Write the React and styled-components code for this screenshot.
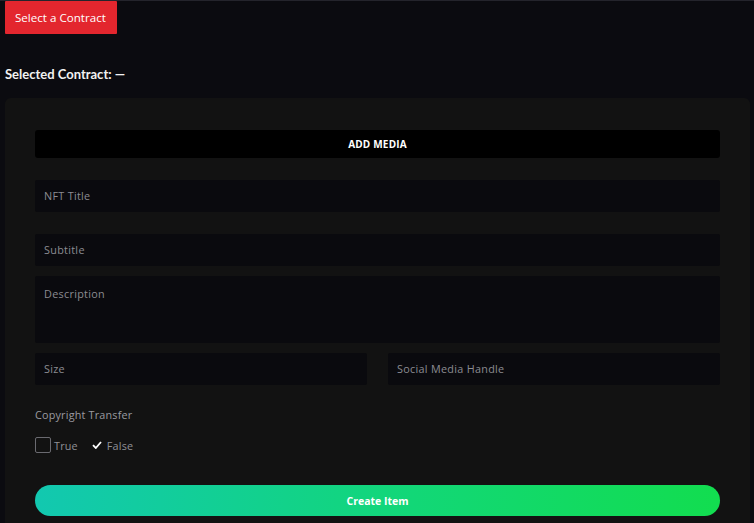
import styled, { createGlobalStyle } from "styled-components";

const GlobalStyle = createGlobalStyle`
  html, body {
    margin: 0;
    padding: 0;
    background: #0b0b10;
  }
  body {
    font-family: "Open Sans", "Liberation Sans", sans-serif;
    color: #ffffff;
  }
`;

const Page = styled.div`
  min-height: 523px;
  box-sizing: border-box;
  border-top: 1px solid #24242c;
  padding: 0 4px 0 5px;
  display: flex;
  flex-direction: column;
  align-items: flex-start;
  overflow: hidden;
`;

const SelectButton = styled.button`
  height: 33px;
  padding: 0 11px 0 10px;
  border: none;
  border-radius: 1px;
  background: #e3262e;
  color: #ffffff;
  font-family: "Open Sans", sans-serif;
  font-size: 11.6px;
  cursor: pointer;
`;

const SelectedLabel = styled.h3`
  margin: 32px 0 0;
  font-family: "Lato", "Liberation Sans", sans-serif;
  font-size: 13px;
  font-weight: 700;
  line-height: 16px;
  color: #f2f2f2;
`;

const Panel = styled.div`
  align-self: stretch;
  margin-top: 16px;
  background: #121212;
  border-radius: 6px;
  padding: 32px 30px 20px;
  display: flex;
  flex-direction: column;
`;

const MediaButton = styled.button`
  height: 28px;
  border: none;
  border-radius: 3px;
  background: #000000;
  color: #ffffff;
  font-family: "Open Sans", sans-serif;
  font-weight: 700;
  font-size: 10px;
  letter-spacing: 0.2px;
`;

const Field = styled.div`
  height: ${(p) => p.$h || 32}px;
  margin-top: ${(p) => p.$mt || 0}px;
  flex: ${(p) => (p.$grow ? 1 : "none")};
  background: #0a0a0e;
  border-radius: 2px;
  box-sizing: border-box;
  padding: ${(p) => (p.$area ? "10px 9px" : "0 9px 1px")};
  display: flex;
  align-items: ${(p) => (p.$area ? "flex-start" : "center")};
  font-size: 10.8px;
  letter-spacing: 0.3px;
  color: #8c8c92;
`;

const Row = styled.div`
  display: flex;
  gap: 21px;
  margin-top: 10px;
`;

const GroupLabel = styled.div`
  margin-top: 22px;
  font-size: 10.8px;
  letter-spacing: 0.2px;
  color: #9a9aa0;
`;

const Options = styled.div`
  display: flex;
  align-items: center;
  margin-top: 15px;
  gap: 3px;
  font-size: 10.8px;
  letter-spacing: 0.2px;
  color: #909096;
`;

const Box = styled.span`
  width: 14px;
  height: 14px;
  border: 1px solid #6a6a70;
  border-radius: 2px;
  display: inline-block;
`;

const Check = styled.span`
  width: 14px;
  height: 14px;
  margin-left: 9px;
  display: inline-flex;
  align-items: center;
  justify-content: center;
`;

const CreateButton = styled.button`
  margin-top: 32px;
  height: 31px;
  border: none;
  border-radius: 16px;
  background: linear-gradient(90deg, #12c8b0 0%, #12d777 55%, #12dd4f 100%);
  color: #ffffff;
  font-family: "Open Sans", sans-serif;
  font-weight: 700;
  font-size: 10.5px;
`;

export default function App() {
  return (
    <>
      <GlobalStyle />
      <Page>
        <SelectButton>Select a Contract</SelectButton>
        <SelectedLabel>Selected Contract: —</SelectedLabel>
        <Panel>
          <MediaButton>ADD MEDIA</MediaButton>
          <Field $mt={22}>NFT Title</Field>
          <Field $mt={22}>Subtitle</Field>
          <Field $mt={10} $h={67} $area>
            Description
          </Field>
          <Row>
            <Field $grow>Size</Field>
            <Field $grow>Social Media Handle</Field>
          </Row>
          <GroupLabel>Copyright Transfer</GroupLabel>
          <Options>
            <Box />
            <span>True</span>
            <Check>
              <svg width="10" height="8" viewBox="0 0 10 8">
                <path d="M1 4.2 L3.8 7 L9 1" fill="none" stroke="#ffffff" strokeWidth="1.8" />
              </svg>
            </Check>
            <span>False</span>
          </Options>
          <CreateButton>Create Item</CreateButton>
        </Panel>
      </Page>
    </>
  );
}
